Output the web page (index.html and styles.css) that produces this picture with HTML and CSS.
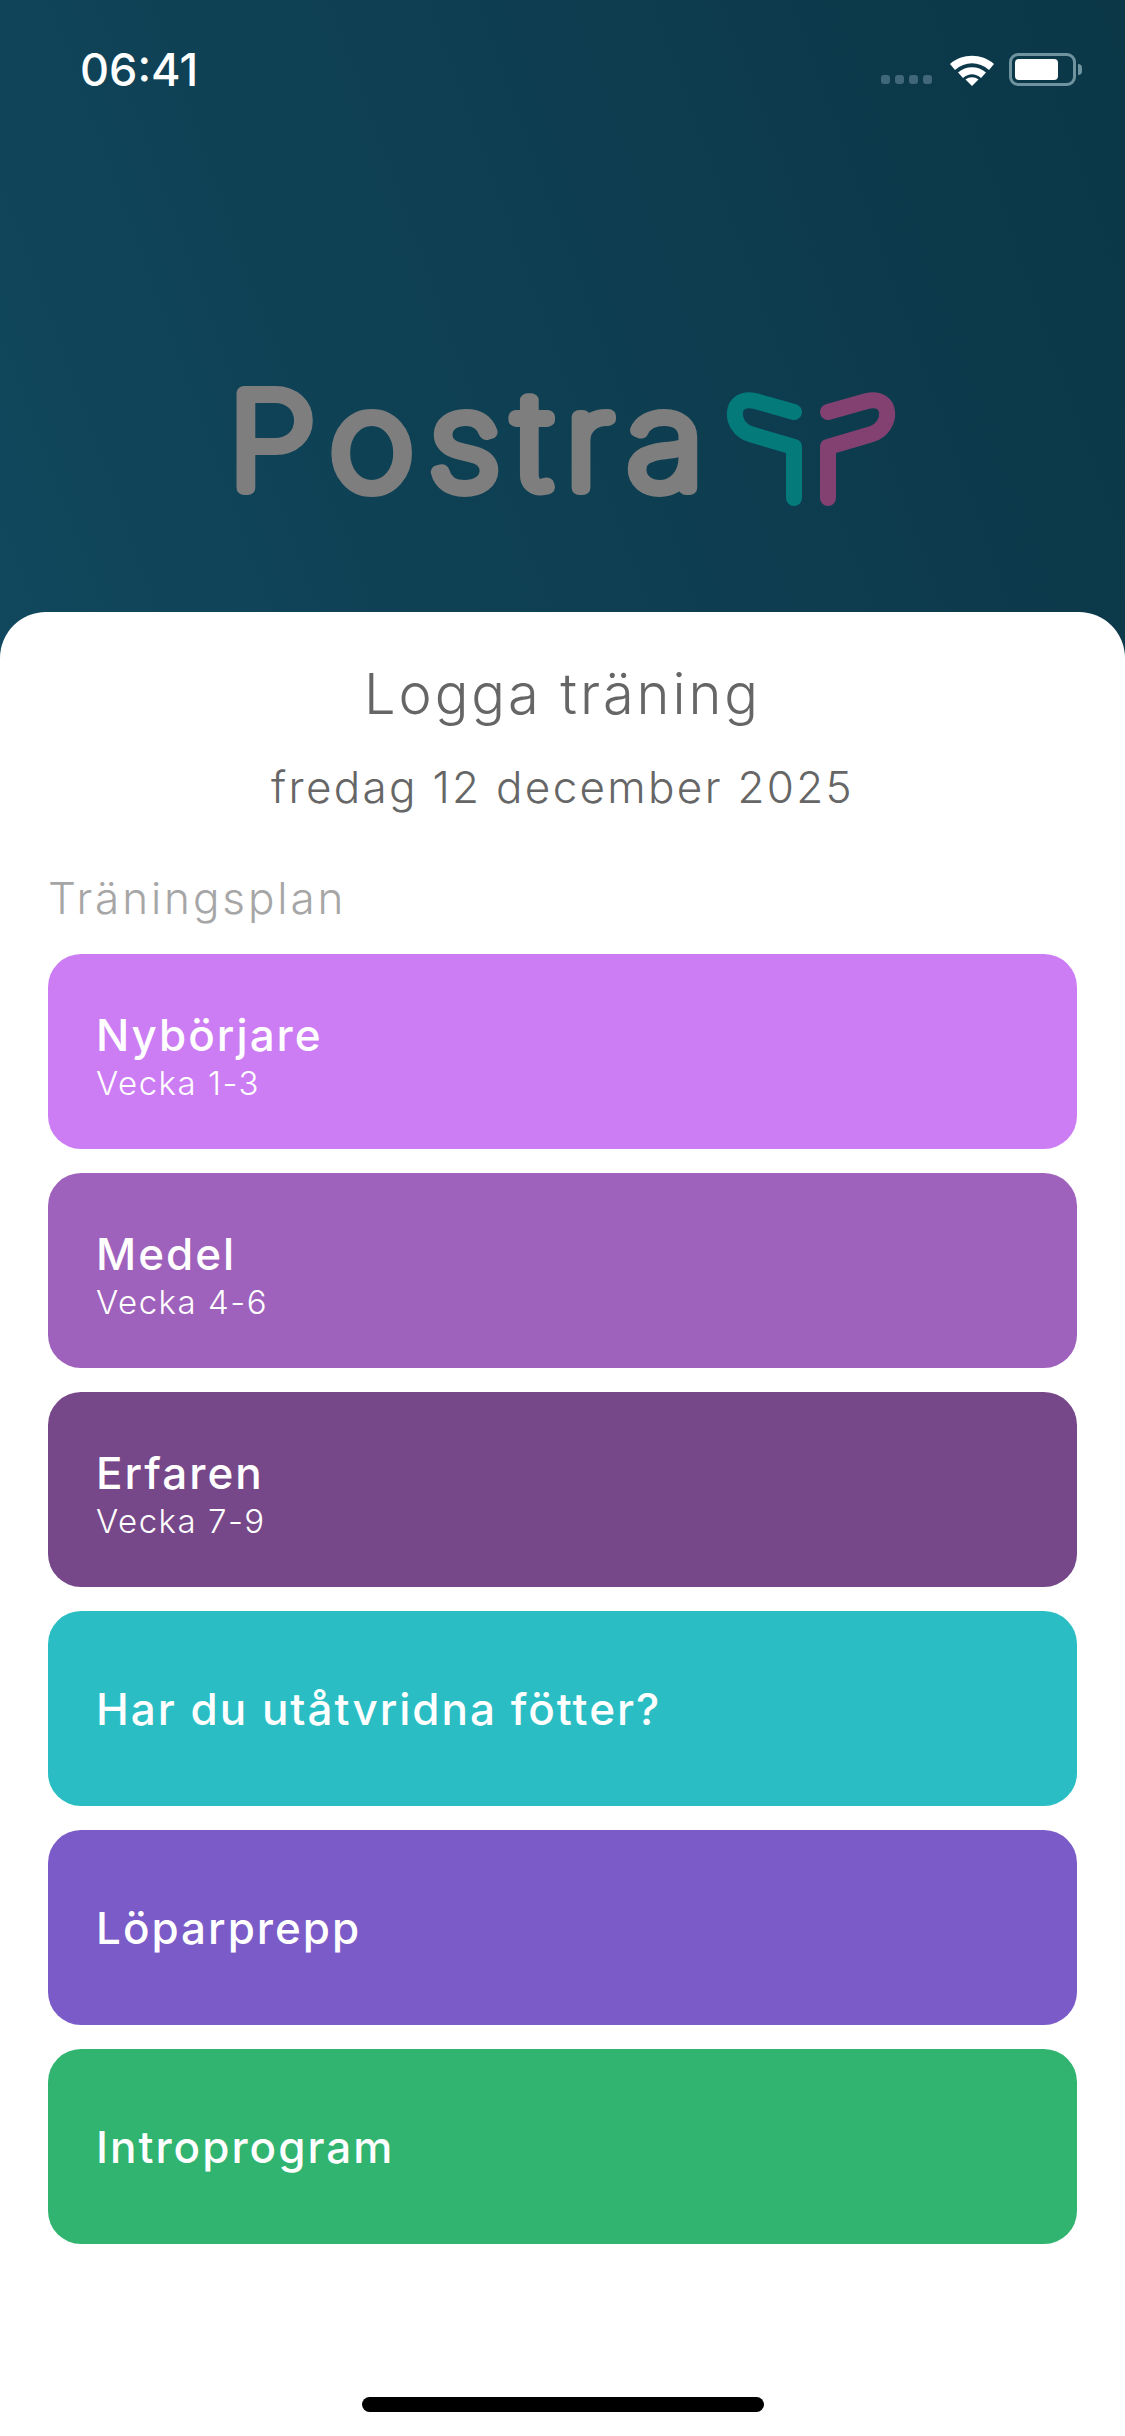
FILE: index.html
```html
<!DOCTYPE html>
<html lang="sv">
<head>
  <meta charset="UTF-8">
  <meta name="viewport" content="width=device-width, initial-scale=1">
  <title>Logga träning</title>
  <link rel="stylesheet" href="styles.css">
</head>
<body>
<div class="screen">
  <header class="top">
    <div class="status">
      <span class="time">06:41</span>
      <div class="status-icons">
        <div class="signal"><i></i><i></i><i></i><i></i></div>
        <svg class="wifi" width="46" height="34" viewBox="0 0 46 34">
          <path d="M1 12 C13 1 33 1 45 12 L40 18 C30 9 16 9 6 18 Z" fill="#fff"/>
          <path d="M9 20.500 C17 13.500 29 13.500 37 20.500 L32 26 C26 21 20 21 14 26 Z" fill="#fff"/>
          <path d="M16.500 27.500 C20.500 24.500 25.500 24.500 29.500 27.500 L23 34 Z" fill="#fff"/>
        </svg>
        <div class="battery"><div class="battery-level"></div></div>
        <div class="battery-cap"></div>
      </div>
    </div>
    <svg class="logo" width="480" height="130" viewBox="230 380 480 130">
      <text class="logo-text" x="228" y="488" textLength="491" lengthAdjust="spacingAndGlyphs">Postra</text>
      <path class="sprout teal" d="M794 498 L794 447 L750 434 C729 427 729 395 755 401 L794 412"/>
      <path class="sprout plum" d="M828 498 L828 447 L872 434 C893 427 893 395 867 401 L828 412"/>
    </svg>
  </header>

  <main class="sheet">
    <h1>Logga träning</h1>
    <p class="date">fredag 12 december 2025</p>
    <h2>Träningsplan</h2>
    <div class="plans">
      <a class="plan has-sub c-beginner"><b>Nybörjare</b><span>Vecka 1-3</span></a>
      <a class="plan has-sub c-medium"><b>Medel</b><span>Vecka 4-6</span></a>
      <a class="plan has-sub c-advanced"><b>Erfaren</b><span>Vecka 7-9</span></a>
      <a class="plan c-feet"><b>Har du utåtvridna fötter?</b></a>
      <a class="plan c-runner"><b>Löparprepp</b></a>
      <a class="plan c-intro"><b>Introprogram</b></a>
    </div>
    <div class="home-bar"></div>
  </main>
</div>
</body>
</html>
```

FILE: styles.css
```css
* { box-sizing: border-box; }
html, body { margin: 0; padding: 0; }
body { font-family: "Inter", "Noto Sans", sans-serif; }
.screen { width: 1125px; height: 2436px; display: flex; flex-direction: column; overflow: hidden; background: linear-gradient(70deg, #15536a 0%, #0f4256 50%, #0b3747 100%); }

.top { height: 612px; flex: none; display: flex; flex-direction: column; }
.status { display: flex; justify-content: space-between; align-items: center; padding: 43px 43px 0 80px; height: 95px; }
.time { font-size: 45px; font-weight: 500; color: #fff; }
.status-icons { display: flex; align-items: center; }
.signal { display: flex; gap: 5px; margin: 20px 17px 0 0; }
.signal i { width: 9px; height: 9px; border-radius: 3px; background: #40687a; }
.wifi { margin-right: 14px; }
.battery { width: 67px; height: 33px; border: 3px solid #6f94a0; border-radius: 9px; padding: 3px; }
.battery-level { width: 43px; height: 100%; background: #fff; border-radius: 4px; }
.battery-cap { width: 4px; height: 11px; background: #6f94a0; border-radius: 0 4px 4px 0; margin-left: 2px; }

.logo { display: block; margin: 285px 0 0 230px; overflow: visible; }
.logo-text { font-family: "Inter", sans-serif; font-size: 130px; font-weight: 100; letter-spacing: 14px; fill: #7e7e7e; stroke: #7e7e7e; stroke-width: 14px; stroke-linejoin: round; stroke-linecap: round; }
.sprout { fill: none; stroke-width: 16px; stroke-linecap: round; stroke-linejoin: round; }
.teal { stroke: #047a7a; }
.plum { stroke: #834172; }

.sheet { flex: 1; background: #fff; border-radius: 46px 46px 0 0; padding: 0 48px; display: flex; flex-direction: column; }
h1 { margin: 47px 0 0; font-size: 56px; line-height: 70px; font-weight: 300; color: #666; text-align: center; letter-spacing: 2.9px; }
.date { margin: 28px 0 0; font-size: 44px; line-height: 60px; font-weight: 300; color: #666; text-align: center; letter-spacing: 2.3px; }
h2 { margin: 52px 0 0; font-size: 44px; line-height: 58px; font-weight: 300; color: #a6a6a6; letter-spacing: 2.9px; }
.plans { display: flex; flex-direction: column; gap: 24px; margin-top: 27px; }
.plan { height: 195px; border-radius: 33px; padding: 0 48px; display: flex; flex-direction: column; justify-content: center; color: #fff; }
.has-sub { padding-top: 6px; }
.plan b { font-size: 44px; line-height: 54px; font-weight: 450; letter-spacing: 2px; }
.plan span { margin-top: 2px; font-size: 33px; line-height: 38px; font-weight: 300; letter-spacing: 1.5px; }
.c-beginner { background: #cc7df3; }
.c-medium { background: #9f62bc; }
.c-advanced { background: #764889; }
.c-feet { background: #2abec4; }
.c-runner { background: #7a5bc7; }
.c-intro { background: #30b46f; }
.home-bar { width: 402px; height: 15px; border-radius: 8px; background: #000; margin: auto auto 24px; }
```
